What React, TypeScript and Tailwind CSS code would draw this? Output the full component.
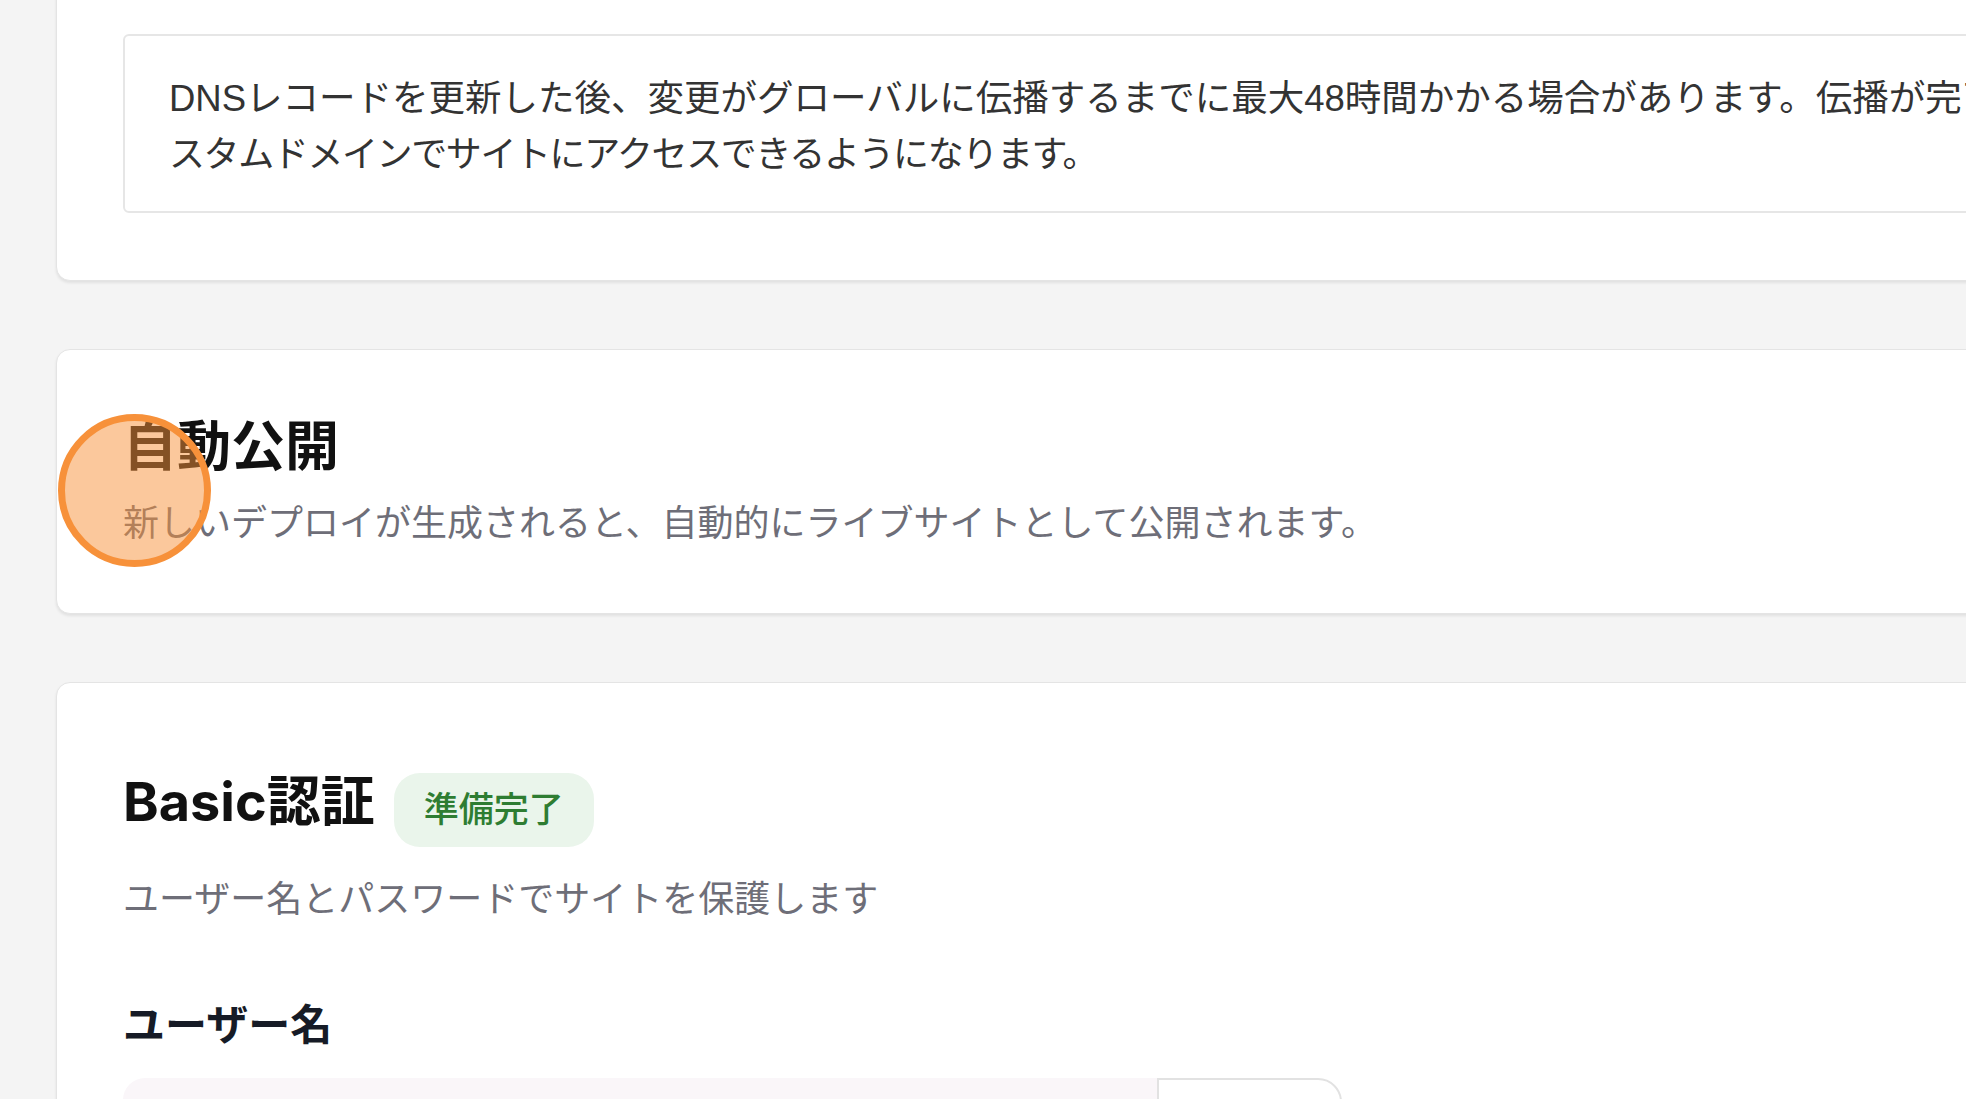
const jp = "font-['Liberation_Sans','Noto_Sans_CJK_JP',sans-serif]";

const Card = ({ className, children }: { className?: string; children: React.ReactNode }) => {
  return (
    <div
      className={`w-[2100px] bg-white rounded-[14px] border border-[#e4e4e4] shadow-[0_2px_3px_rgba(0,0,0,0.08)] ${className ?? ''}`}
    >
      {children}
    </div>
  );
};

const App = () => {
  return (
    <div className={`relative w-[1966px] h-[1099px] overflow-hidden bg-[#f4f4f4] ${jp}`}>
      <div className="flex flex-col gap-[68px] pl-[56px]">
        {/* DNS note */}
        <Card className="mt-[-34px] pt-[67px] pb-[67px] px-[66px]">
          <div className="rounded-[6px] border-2 border-[#e6e6e6] pt-[35px] pb-[28px] pl-[44px] pr-[46px]">
            <p className="leading-[56px] text-[#333333] whitespace-nowrap">
              <span className="block text-[36.5px]">
                DNSレコードを更新した後、変更がグローバルに伝播するまでに最大48時間かかる場合があります。伝播が完了すると、カ
              </span>
              <span className="block text-[36px] tracking-[-1.4px]">
                スタムドメインでサイトにアクセスできるようになります。
              </span>
            </p>
          </div>
        </Card>

        {/* Auto publish */}
        <Card className="pt-[67px] pb-[62px] px-[66px]">
          <h2 className="text-[54px] leading-[60px] font-bold text-[#111111]">自動公開</h2>
          <p className="mt-[20px] text-[36px] leading-[54px] text-[#6e6e78] whitespace-nowrap">
            新しいデプロイが生成されると、自動的にライブサイトとして公開されます。
          </p>
        </Card>

        {/* Basic auth */}
        <Card className="pt-[90px] px-[66px] pb-[60px]">
          <div className="flex items-center gap-[19px]">
            <h2 className="mb-[16px] text-[54px] leading-[56px] font-bold text-[#111111] font-['Inter','Noto_Sans_CJK_JP',sans-serif]">
              Basic認証
            </h2>
            <span className="flex h-[74px] items-center rounded-[26px] bg-[#eaf5eb] px-[30px] text-[35px] font-medium text-[#2e7d32]">
              準備完了
            </span>
          </div>
          <p className="mt-[26px] text-[36px] leading-[54px] text-[#6e6e78]">
            ユーザー名とパスワードでサイトを保護します
          </p>
          <label className="mt-[69px] block text-[42px] leading-[60px] font-bold text-[#161b26]">
            ユーザー名
          </label>
          <div className="mt-[22px] flex h-[96px] w-[1219px]">
            <div className="flex-1 rounded-l-[22px] bg-[#faf6f9]" />
            <div className="w-[185px] rounded-r-[24px] border-2 border-[#e2e2e2] bg-white" />
          </div>
        </Card>
      </div>

      {/* click indicator */}
      <div className="absolute left-[58px] top-[414px] h-[153px] w-[153px] rounded-full border-[7px] border-[#f7913a] bg-[rgba(247,145,58,0.5)]" />
    </div>
  );
};

export default App;
